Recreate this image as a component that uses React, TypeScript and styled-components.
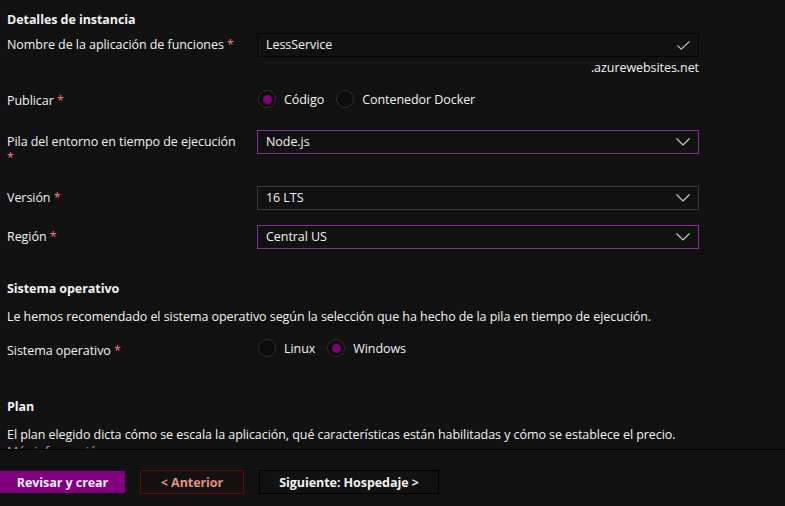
import React from "react";
import styled, { createGlobalStyle } from "styled-components";

const Global = createGlobalStyle`
  html, body { margin: 0; padding: 0; background: #111111; }
  body { font-family: "Segoe UI", "Open Sans", "Noto Sans", sans-serif; color: #f2f2f2; }
  * { box-sizing: border-box; }
`;

const Page = styled.div`
  width: 785px;
  height: 506px;
  display: flex;
  flex-direction: column;
  background: #111111;
  font-size: 12.5px;
  letter-spacing: -0.06px;
`;

const Content = styled.div`
  height: 449px;
  overflow: hidden;
  padding: 11px 0 0 7px;
  display: flex;
  flex-direction: column;
`;

const Heading = styled.h2<{ $mt?: number }>`
  margin: ${(p) => p.$mt ?? 0}px 0 0;
  font-size: 12.5px;
  font-weight: 700;
  line-height: 18px;
`;

const Para = styled.p<{ $mt?: number }>`
  margin: ${(p) => p.$mt ?? 0}px 0 0;
  line-height: 17px;
  width: 690px;
`;

const Link = styled.a`
  color: #d08be6;
  text-decoration: none;
`;

const Row = styled.div<{ $mt?: number }>`
  display: grid;
  grid-template-columns: 250px 442px;
  align-items: start;
  margin-top: ${(p) => p.$mt ?? 0}px;
`;

const Label = styled.div<{ $pt?: number; $lh?: number }>`
  padding-top: ${(p) => p.$pt ?? 0}px;
  line-height: ${(p) => p.$lh ?? 24}px;
  padding-right: 17px;
`;

const Star = styled.span`
  color: #ee7f7f;
`;

const Control = styled.div`
  display: flex;
  flex-direction: column;
`;

const Field = styled.div<{ $border: string }>`
  height: 24px;
  border: 1px solid ${(p) => p.$border};
  background: #111111;
  display: flex;
  align-items: center;
  justify-content: space-between;
  padding: 0 8px 0 8px;
  line-height: 20px;
`;

const Suffix = styled.div`
  margin-top: 3px;
  text-align: right;
  line-height: 16px;
`;

const RadioGroup = styled.div`
  display: flex;
  align-items: center;
  gap: 12px;
  height: 20px;
  padding-left: 1px;
`;

const RadioItem = styled.label`
  display: flex;
  align-items: center;
  gap: 8px;
`;

const Circle = styled.span<{ $on?: boolean }>`
  width: 18px;
  height: 18px;
  border-radius: 50%;
  border: 1px solid #2e2e2e;
  background: #0c0c0c;
  display: flex;
  align-items: center;
  justify-content: center;
  &::after {
    content: "";
    width: 9px;
    height: 9px;
    border-radius: 50%;
    background: ${(p) => (p.$on ? "#800080" : "transparent")};
  }
`;

const Footer = styled.div`
  flex: 1;
  border-top: 1px solid #000000;
  display: flex;
  align-items: flex-start;
  padding-top: 20px;
  gap: 15px;
`;

const Button = styled.button<{ $variant: "primary" | "danger" | "plain"; $w: number }>`
  width: ${(p) => p.$w}px;
  height: ${(p) => (p.$variant === "primary" ? 22 : 24)}px;
  margin-top: ${(p) => (p.$variant === "primary" ? 1 : 0)}px;
  font-family: inherit;
  font-size: 12.5px;
  letter-spacing: -0.06px;
  font-weight: 700;
  cursor: pointer;
  background: ${(p) => (p.$variant === "primary" ? "#800080" : "#111111")};
  color: ${(p) => (p.$variant === "danger" ? "#e8927c" : "#f2f2f2")};
  border: ${(p) =>
    p.$variant === "primary" ? "none" : p.$variant === "danger" ? "1px solid #6b0707" : "1px solid #000000"};
  padding: 0;
`;

const Chevron = () => (
  <svg width="14" height="8" viewBox="0 0 14 8" fill="none">
    <path d="M0.5 0.5 L7 7 L13.5 0.5" stroke="#d0d0d0" strokeWidth="1.1" />
  </svg>
);

const Check = () => (
  <svg width="13" height="9" viewBox="0 0 13 9" fill="none">
    <path d="M0.5 4.5 L4.2 8.2 L12.5 0.5" stroke="#bdbdbd" strokeWidth="1.1" />
  </svg>
);

const Radio = ({ on, children }: { on?: boolean; children: React.ReactNode }) => (
  <RadioItem>
    <Circle $on={on} />
    <span>{children}</span>
  </RadioItem>
);

export default function App() {
  return (
    <>
      <Global />
      <Page>
        <Content>
          <Heading>Detalles de instancia</Heading>
          <Row $mt={4}>
            <Label>
              Nombre de la aplicación de funciones <Star>*</Star>
            </Label>
            <Control>
              <Field $border="#050505">
                <span>LessService</span>
                <Check />
              </Field>
              <Suffix>.azurewebsites.net</Suffix>
            </Control>
          </Row>
          <Row $mt={13}>
            <Label $pt={2} $lh={20}>
              Publicar <Star>*</Star>
            </Label>
            <RadioGroup>
              <Radio on>Código</Radio>
              <Radio>Contenedor Docker</Radio>
            </RadioGroup>
          </Row>
          <Row $mt={19}>
            <Label $pt={4} $lh={16}>
              Pila del entorno en tiempo de ejecución <Star>*</Star>
            </Label>
            <Field $border="#8a2a9e">
              <span>Node.js</span>
              <Chevron />
            </Field>
          </Row>
          <Row $mt={20}>
            <Label>
              Versión <Star>*</Star>
            </Label>
            <Field $border="#3a3a3a">
              <span>16 LTS</span>
              <Chevron />
            </Field>
          </Row>
          <Row $mt={15}>
            <Label>
              Región <Star>*</Star>
            </Label>
            <Field $border="#8a2a9e">
              <span>Central US</span>
              <Chevron />
            </Field>
          </Row>
          <Heading $mt={31}>Sistema operativo</Heading>
          <Para $mt={10}>
            Le hemos recomendado el sistema operativo según la selección que ha hecho de la pila en tiempo de ejecución.
          </Para>
          <Row $mt={13}>
            <Label $pt={3} $lh={20}>
              Sistema operativo <Star>*</Star>
            </Label>
            <RadioGroup>
              <Radio>Linux</Radio>
              <Radio on>Windows</Radio>
            </RadioGroup>
          </Row>
          <Heading $mt={37}>Plan</Heading>
          <Para $mt={10}>
            El plan elegido dicta cómo se escala la aplicación, qué características están habilitadas y cómo se establece el precio.{" "}
            <Link href="#">Más información</Link>
          </Para>
        </Content>
        <Footer>
          <Button $variant="primary" $w={125}>Revisar y crear</Button>
          <Button $variant="danger" $w={104}>&lt; Anterior</Button>
          <Button $variant="plain" $w={180}>Siguiente: Hospedaje &gt;</Button>
        </Footer>
      </Page>
    </>
  );
}
